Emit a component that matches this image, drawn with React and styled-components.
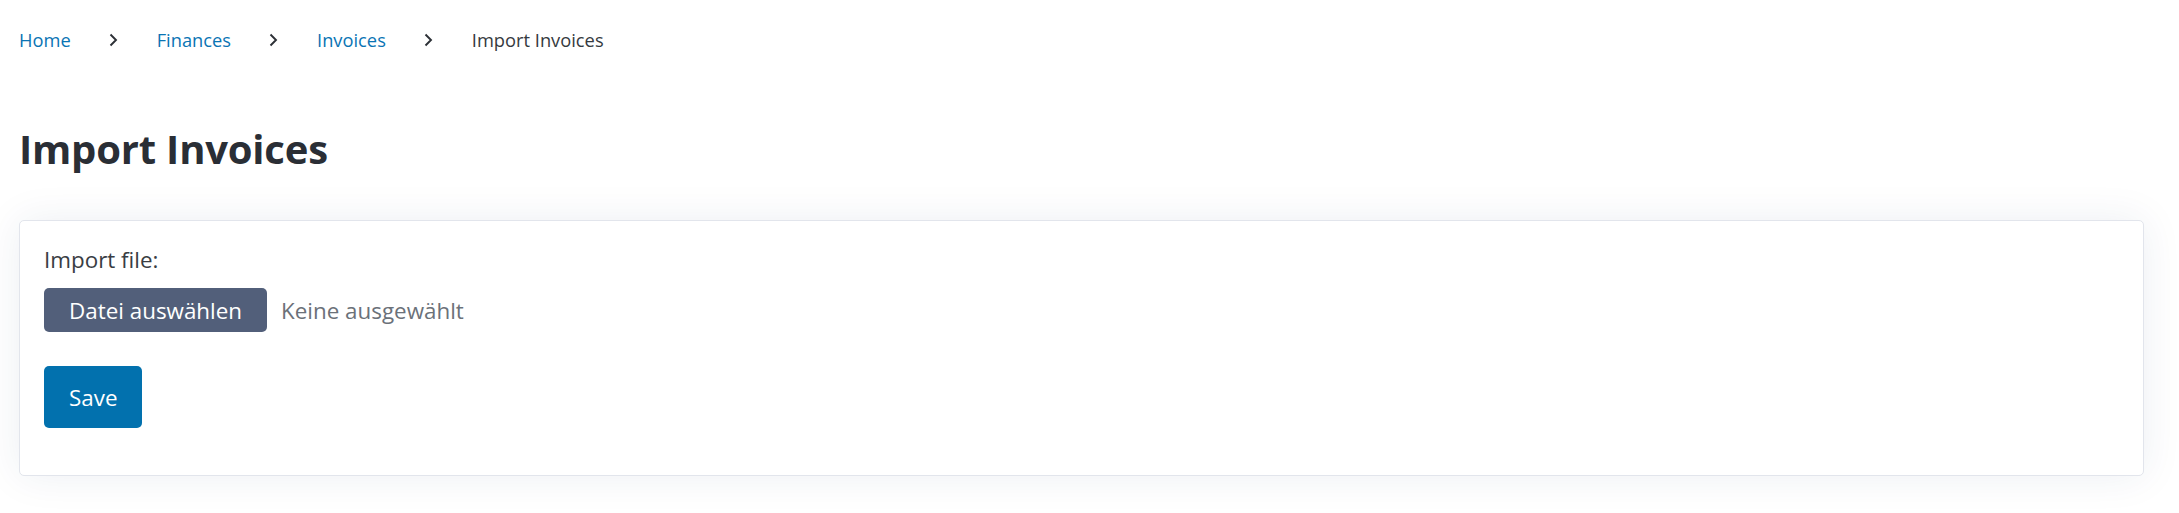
import React from 'react';
import styled, { createGlobalStyle } from 'styled-components';

const GlobalStyle = createGlobalStyle`
  html, body {
    margin: 0;
    padding: 0;
    background: #ffffff;
  }
  body {
    font-family: 'Open Sans', 'Noto Sans', sans-serif;
    color: #3a3f45;
  }
`;

const StyledPage = styled.div`
  padding: 25px 35px 40px 19px;
`;

const StyledBreadcrumb = styled.nav`
  ol {
    display: flex;
    align-items: center;
    margin: 0;
    padding: 0;
    list-style: none;
    font-size: 18.3px;
    line-height: 29px;
  }

  li {
    display: flex;
    align-items: center;
  }

  a {
    color: #0a74b4;
    text-decoration: none;
  }

  .current {
    color: #353a40;
  }
`;

const StyledChevron = styled.svg`
  width: 9px;
  height: 14px;
  margin: 0 39px 0 38px;
  color: #2c3036;
`;

const StyledTitle = styled.h1`
  margin: 69px 0 45px;
  color: #2a2e35;
  font-size: 40px;
  font-weight: 700;
  line-height: 52px;
  letter-spacing: -0.2px;
`;

const StyledCard = styled.section`
  padding: 22px 24px 47px;
  border: 1px solid #e2e5ec;
  border-radius: 5px;
  background: #ffffff;
  box-shadow: 0 0 40px rgba(30, 50, 100, 0.08);
`;

const StyledLabel = styled.div`
  font-size: 22.4px;
  line-height: 33px;
  color: #393d43;
`;

const StyledFileRow = styled.div`
  display: flex;
  align-items: center;
  gap: 14px;
  margin-top: 12px;

  input {
    display: none;
  }
`;

const StyledButton = styled.button`
  display: inline-flex;
  align-items: center;
  justify-content: center;
  height: ${({ tall }) => (tall ? '62px' : '44px')};
  padding: 0 25px;
  border: 0;
  border-radius: 5px;
  background: ${({ variant }) => (variant === 'primary' ? '#0271ae' : '#525f7a')};
  color: #ffffff;
  font-family: inherit;
  font-size: 22.4px;
  cursor: pointer;
`;

const StyledFileName = styled.span`
  color: #6b7179;
  font-size: 22.4px;
`;

const StyledActions = styled.div`
  margin-top: 34px;
`;

const Chevron = () => (
  <StyledChevron viewBox="0 0 9 14" fill="none">
    <polyline points="1.5,1.5 7,7 1.5,12.5" stroke="currentColor" strokeWidth="1.9" />
  </StyledChevron>
);

const crumbs = [
  { label: 'Home', href: '#' },
  { label: 'Finances', href: '#' },
  { label: 'Invoices', href: '#' },
  { label: 'Import Invoices' },
];

const App = () => (
  <>
    <GlobalStyle />
    <StyledPage>
      <StyledBreadcrumb aria-label="breadcrumb">
        <ol>
          {crumbs.map((crumb, i) => (
            <li key={i}>
              {crumb.href ? (
                <a href={crumb.href}>{crumb.label}</a>
              ) : (
                <span className="current">{crumb.label}</span>
              )}
              {i < crumbs.length - 1 && <Chevron />}
            </li>
          ))}
        </ol>
      </StyledBreadcrumb>

      <StyledTitle>Import Invoices</StyledTitle>

      <StyledCard>
        <StyledLabel>Import file:</StyledLabel>
        <StyledFileRow>
          <StyledButton as="label">
            <input type="file" />
            Datei auswählen
          </StyledButton>
          <StyledFileName>Keine ausgewählt</StyledFileName>
        </StyledFileRow>
        <StyledActions>
          <StyledButton variant="primary" tall>
            Save
          </StyledButton>
        </StyledActions>
      </StyledCard>
    </StyledPage>
  </>
);

export default App;
